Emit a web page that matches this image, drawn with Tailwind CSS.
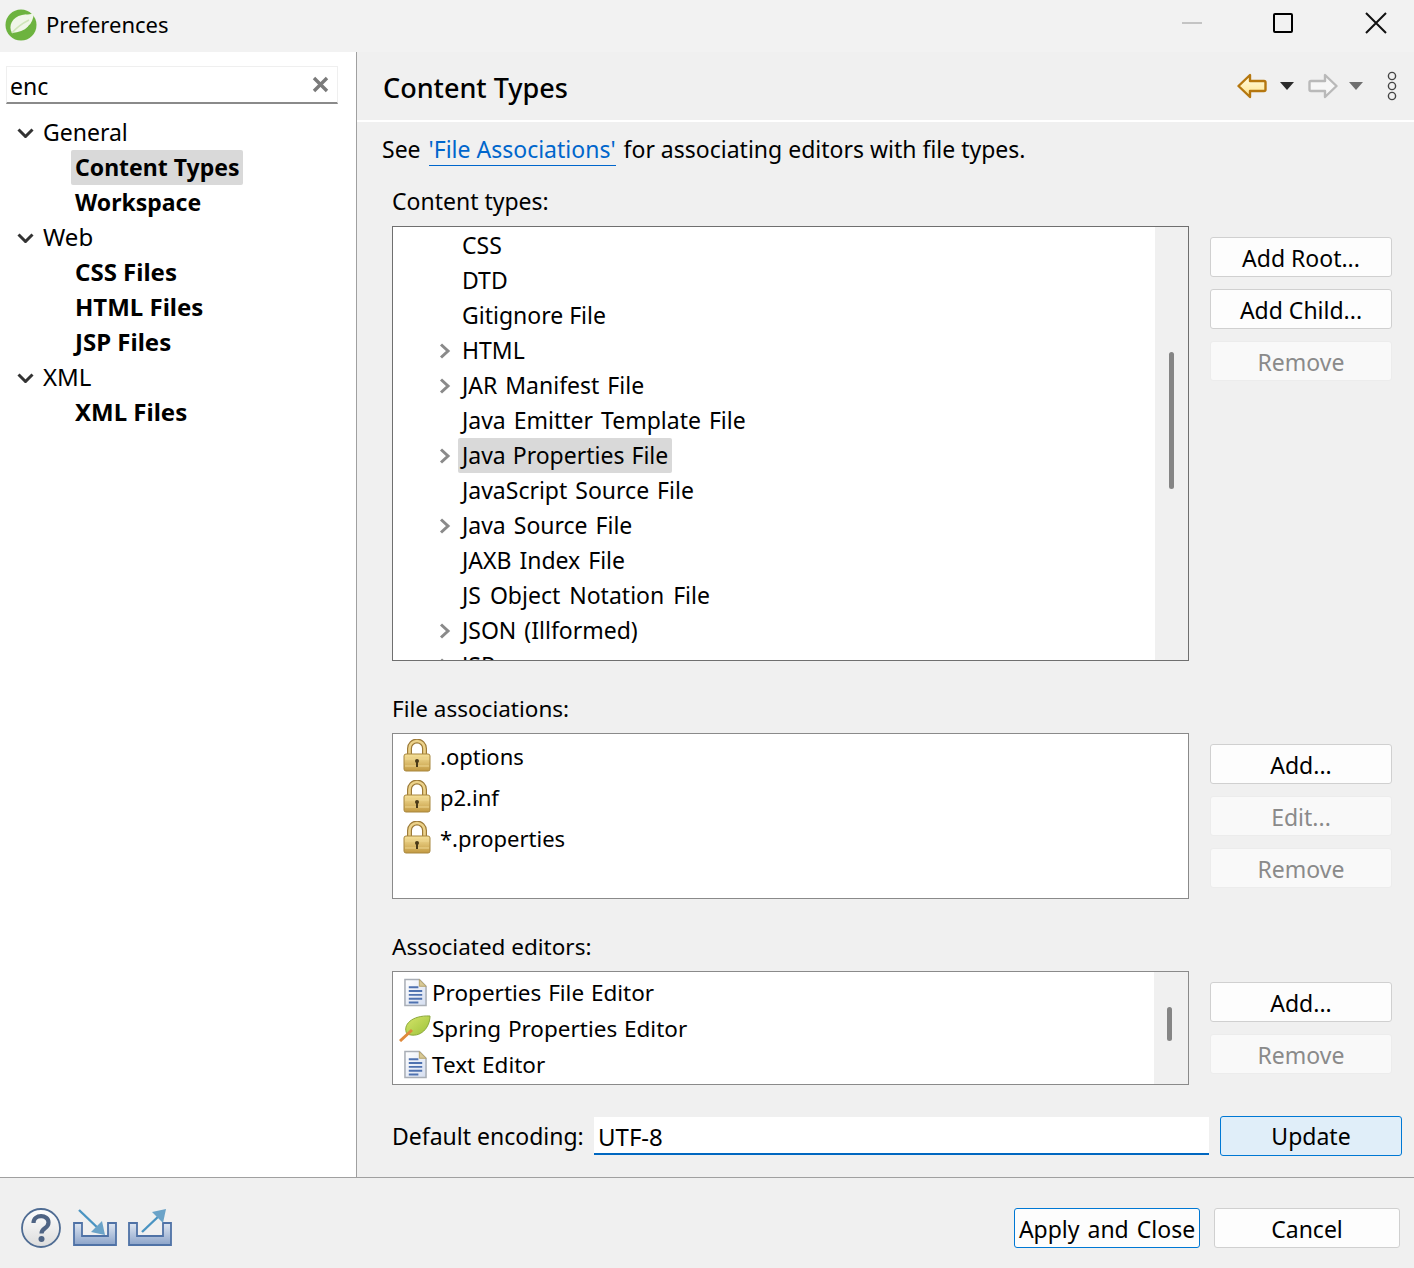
<!DOCTYPE html>
<html lang="en">
<head>
<meta charset="UTF-8">
<title>Preferences</title>
<script src="https://cdn.jsdelivr.net/npm/@tailwindcss/browser@4"></script>
</head>
<body class="font-['Noto_Sans',sans-serif] text-[23px] leading-[35px] text-black bg-[#f0f0f0]">
<svg width="0" height="0" class="absolute">
  <defs>
    <linearGradient id="gold" x1="0" y1="0" x2="0" y2="1"><stop offset="0" stop-color="#f6e19a"/><stop offset="1" stop-color="#c39a42"/></linearGradient>
    <linearGradient id="tray" x1="0" y1="0" x2="0" y2="1"><stop offset="0" stop-color="#dfe7f2"/><stop offset="1" stop-color="#8ba3c9"/></linearGradient>
    <linearGradient id="arrowfill" x1="0" y1="0" x2="0" y2="1"><stop offset="0" stop-color="#fffde8"/><stop offset="1" stop-color="#ffe38a"/></linearGradient>
    <linearGradient id="helpfill" x1="0" y1="0" x2="0" y2="1"><stop offset="0" stop-color="#ffffff"/><stop offset="1" stop-color="#dcdcdc"/></linearGradient>
    <linearGradient id="docfill" x1="0" y1="0" x2="1" y2="1"><stop offset="0" stop-color="#ffffff"/><stop offset="1" stop-color="#d5def0"/></linearGradient>
    <linearGradient id="leaf" x1="0" y1="0" x2="1" y2="1"><stop offset="0" stop-color="#d6e56a"/><stop offset="1" stop-color="#9cc23a"/></linearGradient>
    <symbol id="lock" viewBox="0 0 28 33">
      <path d="M6.500 16V9.500a7.500 7.500 0 0 1 15 0V16" fill="none" stroke="#9c7a38" stroke-width="5"/>
      <path d="M6.500 16V9.500a7.500 7.500 0 0 1 15 0V16" fill="none" stroke="#ecd28a" stroke-width="2.600"/>
      <rect x="1" y="15" width="26" height="17" rx="2" fill="url(#gold)" stroke="#a8873e"/>
      <path d="M2 20h24M2 27h24" stroke="#eed690" stroke-width="1"/>
      <circle cx="14" cy="22" r="2" fill="#4a3a18"/><rect x="13" y="22" width="2" height="6" fill="#4a3a18"/>
    </symbol>
    <symbol id="doc" viewBox="0 0 24 29">
      <path d="M1 1h15l7 7v20H1z" fill="url(#docfill)" stroke="#a9aeb6" stroke-width="1.600"/>
      <path d="M16 1v7h7z" fill="#d8c996" stroke="#b5a268"/>
      <path d="M5 9h10M5 13h14M5 17h14M5 21h14M5 25h10" stroke="#4f72b0" stroke-width="2"/>
    </symbol>
  </defs>
</svg>
<div class="w-[1414px] h-[1268px] flex flex-col overflow-hidden">

  <!-- title bar -->
  <div class="h-[52px] bg-[#f2f2f2] flex items-center pl-[5px] shrink-0">
    <svg width="32" height="32" viewBox="0 0 32 32" class="mb-[3px]">
      <circle cx="16" cy="16" r="15.500" fill="#6db33f"/>
      <path d="M29 4C28 15 21 23 7 24 3 17 7 8 17 6c4-1 8 0 12-2z" fill="#f0f6e8"/>
      <path d="M6 27c7 0 15-3 19-11" stroke="#6db33f" stroke-width="1.500" fill="none"/>
      <path d="M7 24C12 18 18 14 24 11" stroke="#cfe5b8" stroke-width="1.500" fill="none"/>
    </svg>
    <span class="ml-[9px] leading-none mb-[5px] text-[22px]">Preferences</span>
    <div class="ml-auto flex items-center h-full">
      <span class="w-[20px] h-[2px] bg-[#c4c4c4] mr-[71px] mb-[6px]"></span>
      <span class="w-[20px] h-[20px] border-2 border-black rounded-[2px] mr-[72px] mb-[6px]"></span>
      <svg width="22" height="22" viewBox="0 0 22 22" class="mr-[27px] mb-[6px]"><path d="M1 1l20 20M21 1L1 21" stroke="#111" stroke-width="2"/></svg>
    </div>
  </div>

  <div class="flex flex-1 min-h-0">
    <!-- sidebar -->
    <div class="w-[357px] shrink-0 bg-white border-r border-[#a0a0a0] pt-[14px] pl-[6px]">
      <div class="w-[332px] h-[38px] border border-[#efefef] border-b-[#8a8a8a] border-b-2 flex items-center pl-[3px] pr-[8px]">
        <span class="mt-[3px]">enc</span>
        <svg width="17" height="17" viewBox="0 0 17 17" class="ml-auto"><path d="M2 2l13 13M15 2L2 15" stroke="#7a7a7a" stroke-width="3.400"/></svg>
      </div>
      <div class="mt-[11px]">
        <div class="flex items-center h-[35px] pl-[11px]">
          <svg width="17" height="10" viewBox="0 0 17 10"><path d="M1.500 1.500l7 7 7-7" fill="none" stroke="#333" stroke-width="3"/></svg>
          <span class="ml-[9px]">General</span>
        </div>
        <div class="h-[35px] pl-[65px] flex items-center"><span class="bg-[#d9d9d9] rounded-[2px] px-[4px] font-bold">Content Types</span></div>
        <div class="h-[35px] pl-[69px] flex items-center font-bold">Workspace</div>
        <div class="flex items-center h-[35px] pl-[11px]">
          <svg width="17" height="10" viewBox="0 0 17 10"><path d="M1.500 1.500l7 7 7-7" fill="none" stroke="#333" stroke-width="3"/></svg>
          <span class="ml-[9px] text-[24px] mb-[2px]">Web</span>
        </div>
        <div class="h-[35px] pl-[69px] pb-[2px] flex items-center font-bold text-[24px]">CSS Files</div>
        <div class="h-[35px] pl-[69px] pb-[2px] flex items-center font-bold text-[24px]">HTML Files</div>
        <div class="h-[35px] pl-[69px] pb-[2px] flex items-center font-bold text-[24px]">JSP Files</div>
        <div class="flex items-center h-[35px] pl-[11px]">
          <svg width="17" height="10" viewBox="0 0 17 10"><path d="M1.500 1.500l7 7 7-7" fill="none" stroke="#333" stroke-width="3"/></svg>
          <span class="ml-[9px] text-[24px] mb-[2px]">XML</span>
        </div>
        <div class="h-[35px] pl-[69px] pb-[2px] flex items-center font-bold text-[24px]">XML Files</div>
      </div>
    </div>

    <!-- right pane -->
    <div class="flex-1 min-w-0 bg-[#f0f0f0]">
      <div class="h-[70px] border-b-2 border-white flex items-center pl-[26px] pr-[17px]">
        <h1 class="font-medium text-[27px] mt-[3px]">Content Types</h1>
        <div class="ml-auto flex items-center">
          <svg width="30" height="26" viewBox="0 0 30 26"><path d="M1.500 13L13 2v6h14a1.500 1.500 0 0 1 1.500 1.500v7A1.500 1.500 0 0 1 27 18H13v6z" fill="url(#arrowfill)" stroke="#b5770f" stroke-width="2.400" stroke-linejoin="round"/></svg>
          <svg width="14" height="8" viewBox="0 0 14 8" class="ml-[13px]"><path d="M0 0h14L7 8z" fill="#2b2b2b"/></svg>
          <svg width="30" height="26" viewBox="0 0 30 26" class="ml-[14px]"><path d="M28.500 13L17 2v6H3a1.500 1.500 0 0 0-1.500 1.500v7A1.500 1.500 0 0 0 3 18h14v6z" fill="#f7f7f7" stroke="#b9b9b9" stroke-width="2.400" stroke-linejoin="round"/></svg>
          <svg width="14" height="8" viewBox="0 0 14 8" class="ml-[11px]"><path d="M0 0h14L7 8z" fill="#6f6f6f"/></svg>
          <svg width="10" height="30" viewBox="0 0 10 30" class="ml-[24px]"><circle cx="5" cy="5" r="3.600" fill="none" stroke="#444" stroke-width="1.400"/><circle cx="5" cy="15" r="3.600" fill="none" stroke="#444" stroke-width="1.400"/><circle cx="5" cy="25" r="3.600" fill="none" stroke="#444" stroke-width="1.400"/></svg>
        </div>
      </div>

      <div class="pl-[25px] h-[35px] mt-[10px]">See <a class="text-[#0066cc] border-b border-[#0066cc] ml-[2px] mr-[2px]">'File Associations'</a> for associating editors with file types.</div>

      <div class="pl-[35px] pr-[21px]">
        <div class="mt-[17px] h-[35px]">Content types:</div>
        <div class="flex mt-[7px]">
          <div class="w-[797px] h-[435px] border border-[#6f6f6f] bg-white flex overflow-hidden shrink-0">
            <div class="flex-1 pl-[46px] pt-[1px]">
              <div class="h-[35px] pl-[23px]">CSS</div>
              <div class="h-[35px] pl-[23px]">DTD</div>
              <div class="h-[35px] pl-[23px]">Gitignore File</div>
              <div class="h-[35px] flex items-center"><svg width="12" height="16" viewBox="0 0 12 16"><path d="M2 1.500l7 6.500-7 6.500" fill="none" stroke="#8a8a8a" stroke-width="3"/></svg><span class="ml-[11px]">HTML</span></div>
              <div class="h-[35px] flex items-center"><svg width="12" height="16" viewBox="0 0 12 16"><path d="M2 1.500l7 6.500-7 6.500" fill="none" stroke="#8a8a8a" stroke-width="3"/></svg><span class="ml-[11px] [word-spacing:2px]">JAR Manifest File</span></div>
              <div class="h-[35px] pl-[23px] [word-spacing:2px]">Java Emitter Template File</div>
              <div class="h-[35px] flex items-center"><svg width="12" height="16" viewBox="0 0 12 16"><path d="M2 1.500l7 6.500-7 6.500" fill="none" stroke="#8a8a8a" stroke-width="3"/></svg><span class="ml-[7px] bg-[#d9d9d9] rounded-[2px] px-[4px] [word-spacing:1px]">Java Properties File</span></div>
              <div class="h-[35px] pl-[23px] [word-spacing:2px]">JavaScript Source File</div>
              <div class="h-[35px] flex items-center"><svg width="12" height="16" viewBox="0 0 12 16"><path d="M2 1.500l7 6.500-7 6.500" fill="none" stroke="#8a8a8a" stroke-width="3"/></svg><span class="ml-[11px] [word-spacing:2px]">Java Source File</span></div>
              <div class="h-[35px] pl-[23px] [word-spacing:2px]">JAXB Index File</div>
              <div class="h-[35px] pl-[23px] [word-spacing:3px]">JS Object Notation File</div>
              <div class="h-[35px] flex items-center"><svg width="12" height="16" viewBox="0 0 12 16"><path d="M2 1.500l7 6.500-7 6.500" fill="none" stroke="#8a8a8a" stroke-width="3"/></svg><span class="ml-[11px] [word-spacing:2px]">JSON (Illformed)</span></div>
              <div class="h-[35px] flex items-center"><svg width="12" height="16" viewBox="0 0 12 16"><path d="M2 1.500l7 6.500-7 6.500" fill="none" stroke="#8a8a8a" stroke-width="3"/></svg><span class="ml-[11px]">JSP</span></div>
            </div>
            <div class="w-[33px] bg-[#f0f0f0] pt-[125px] pl-[14px] shrink-0">
              <div class="w-[5px] h-[137px] bg-[#858585] rounded-full"></div>
            </div>
          </div>
          <div class="ml-[21px] w-[182px] pt-[11px] flex flex-col gap-[12px]">
            <button class="h-[40px] pt-[2px] bg-[#fdfdfd] border border-[#d0d0d0] rounded-[3px]">Add Root...</button>
            <button class="h-[40px] pt-[2px] bg-[#fdfdfd] border border-[#d0d0d0] rounded-[3px]">Add Child...</button>
            <button class="h-[40px] pt-[2px] bg-[#f9f9f9] border border-[#ececec] rounded-[3px] text-[#8a8a8a]">Remove</button>
          </div>
        </div>

        <div class="mt-[30px] h-[35px] text-[22.500px]">File associations:</div>
        <div class="flex mt-[7px]">
          <div class="w-[797px] h-[166px] border border-[#8a8a8a] bg-white shrink-0 pl-[10px] pt-[2px] text-[22px]">
            <div class="h-[41px] flex items-center"><svg width="28" height="33" class="mb-[2px]"><use href="#lock"/></svg><span class="ml-[9px]">.options</span></div>
            <div class="h-[41px] flex items-center"><svg width="28" height="33" class="mb-[2px]"><use href="#lock"/></svg><span class="ml-[9px]">p2.inf</span></div>
            <div class="h-[41px] flex items-center"><svg width="28" height="33" class="mb-[2px]"><use href="#lock"/></svg><span class="ml-[9px]">*.properties</span></div>
          </div>
          <div class="ml-[21px] w-[182px] pt-[11px] flex flex-col gap-[12px]">
            <button class="h-[40px] pt-[2px] bg-[#fdfdfd] border border-[#d0d0d0] rounded-[3px]">Add...</button>
            <button class="h-[40px] pt-[2px] bg-[#f9f9f9] border border-[#ececec] rounded-[3px] text-[#8a8a8a]">Edit...</button>
            <button class="h-[40px] pt-[2px] bg-[#f9f9f9] border border-[#ececec] rounded-[3px] text-[#8a8a8a]">Remove</button>
          </div>
        </div>

        <div class="mt-[30px] h-[35px] text-[22.500px]">Associated editors:</div>
        <div class="flex mt-[7px]">
          <div class="w-[797px] h-[114px] border border-[#8a8a8a] bg-white flex overflow-hidden shrink-0 text-[22.500px]">
            <div class="flex-1 pl-[6px] pt-[2px]">
              <div class="h-[36px] flex items-center pl-[5px]"><svg width="23" height="29"><use href="#doc"/></svg><span class="ml-[5px] [word-spacing:1px]">Properties File Editor</span></div>
              <div class="h-[36px] flex items-center">
                <svg width="32" height="28" viewBox="0 0 32 28"><path d="M8 20C3 11 13 1 31 2c0 11-9 23-23 18z" fill="url(#leaf)" stroke="#8ba83a"/><path d="M1 27L13 16" stroke="#e08a3c" stroke-width="3"/></svg>
                <span class="ml-[1px] [word-spacing:1px]">Spring Properties Editor</span>
              </div>
              <div class="h-[36px] flex items-center pl-[5px]"><svg width="23" height="29"><use href="#doc"/></svg><span class="ml-[5px] [word-spacing:1px]">Text Editor</span></div>
            </div>
            <div class="w-[34px] bg-[#f0f0f0] pt-[35px] pl-[13px] shrink-0">
              <div class="w-[5px] h-[34px] bg-[#858585] rounded-full"></div>
            </div>
          </div>
          <div class="ml-[21px] w-[182px] pt-[11px] flex flex-col gap-[12px]">
            <button class="h-[40px] pt-[2px] bg-[#fdfdfd] border border-[#d0d0d0] rounded-[3px]">Add...</button>
            <button class="h-[40px] pt-[2px] bg-[#f9f9f9] border border-[#ececec] rounded-[3px] text-[#8a8a8a]">Remove</button>
          </div>
        </div>

        <div class="flex items-center mt-[31px] h-[40px]">
          <span class="w-[202px] shrink-0 whitespace-nowrap">Default encoding:</span>
          <div class="w-[615px] h-[38px] bg-white border-b-2 border-[#0067c0] pl-[4px] pt-[2px] flex items-center shrink-0 text-[24px]">UTF-8</div>
          <button class="ml-[11px] w-[182px] h-[40px] pt-[1px] shrink-0 bg-[#e0eef9] border border-[#0078d4] rounded-[3px]">Update</button>
        </div>
      </div>
    </div>
  </div>

  <!-- footer -->
  <div class="h-[91px] shrink-0 border-t border-[#a0a0a0] bg-[#f0f0f0] flex items-center pl-[21px] pr-[14px] pt-[9px]">
    <svg width="40" height="40" viewBox="0 0 40 40"><circle cx="20" cy="20" r="19" fill="url(#helpfill)" stroke="#4f6c93" stroke-width="1.800"/><path d="M12.500 15c0-9 15-9 15-.5 0 6-7 5.500-7 11" fill="none" stroke="#4f6484" stroke-width="4.200"/><circle cx="20.500" cy="31" r="3" fill="#4f6484"/></svg>
    <svg width="44" height="40" viewBox="0 0 44 40" class="ml-[12px]"><path d="M1 15h8v13h26V15h8v22H1z" fill="url(#tray)" stroke="#4f72a6" stroke-width="1.800"/><path d="M6 2l22 21" stroke="#4a94c2" stroke-width="2.400"/><path d="M32 27l-3-14-11 11z" fill="#6ba3c8"/></svg>
    <svg width="44" height="40" viewBox="0 0 44 40" class="ml-[11px]"><path d="M1 15h8v13h26V15h8v22H1z" fill="url(#tray)" stroke="#4f72a6" stroke-width="1.800"/><path d="M14 24L33 6" stroke="#4a94c2" stroke-width="2.400"/><path d="M38 1l-3 14-11-11z" fill="#6ba3c8"/></svg>
    <button class="ml-auto w-[186px] h-[40px] pt-[3px] bg-[#fdfdfd] border border-[#0078d4] rounded-[3px] [word-spacing:2px]">Apply and Close</button>
    <button class="ml-[14px] w-[186px] h-[40px] pt-[3px] bg-[#fdfdfd] border border-[#d0d0d0] rounded-[3px]">Cancel</button>
  </div>
</div>
</body>
</html>
